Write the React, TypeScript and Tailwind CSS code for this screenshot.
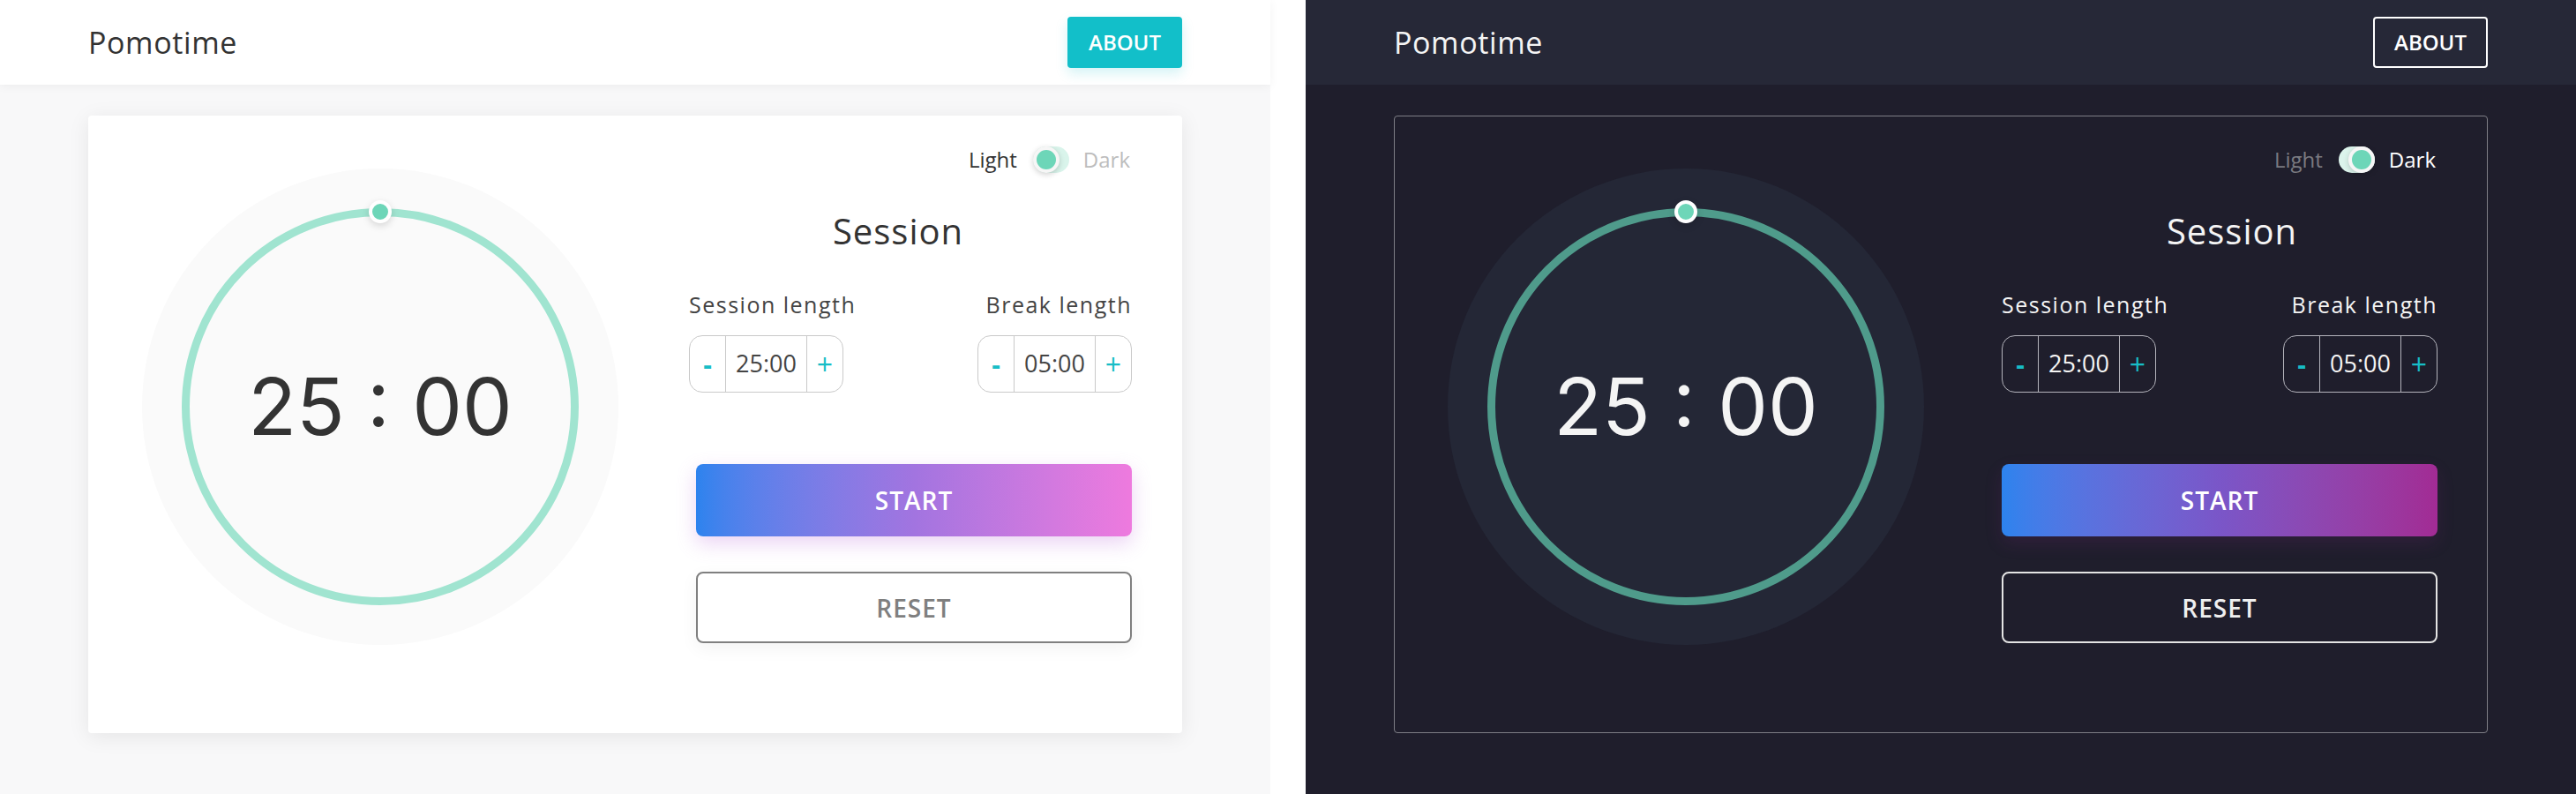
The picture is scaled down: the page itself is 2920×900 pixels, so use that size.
import React from "react";

const ui = "font-['Open_Sans',sans-serif]";

function Stepper({ value, dark }: { value: string; dark: boolean }) {
  const line = dark ? "border-[#b4b4bc]" : "border-[#c9c9c9]";
  return (
    <div className={`flex h-[65px] w-[175px] rounded-[15px] border ${line}`}>
      <div className={`flex w-[41px] items-center justify-center border-r ${line} text-[30px] font-bold text-[#17bdc6]`}>
        -
      </div>
      <div
        className={`flex w-[92px] items-center justify-center border-r ${line} text-[27px] ${
          dark ? "text-[#f4f4f4]" : "text-[#444]"
        }`}
      >
        {value}
      </div>
      <div className="flex flex-1 items-center justify-center text-[32px] text-[#17bdc6]">+</div>
    </div>
  );
}

function Toggle({ dark }: { dark: boolean }) {
  return (
    <div className={`flex h-[30px] w-[41px] rounded-full ${dark ? "justify-end bg-[#dcf4ec]" : "bg-[#d9f4eb]"}`}>
      <div className="h-[30px] w-[30px] rounded-full border-4 border-[#f6f6f6] bg-[#6dd6b8] shadow-[0_2px_6px_rgba(0,0,0,0.18)]" />
    </div>
  );
}

function Panel({ dark }: { dark: boolean }) {
  const text = dark ? "text-[#f4f4f4]" : "text-[#333]";
  const label = dark ? "text-[#f4f4f4]" : "text-[#444]";
  return (
    <div className={`flex h-[900px] w-[1440px] shrink-0 flex-col ${ui} ${dark ? "bg-[#1f1e2c]" : "bg-[#f8f8f9]"}`}>
      {/* Header */}
      <header
        className={`flex h-[96px] shrink-0 items-center justify-between px-[100px] ${
          dark ? "bg-[#262837]" : "bg-white shadow-[0_2px_10px_rgba(0,0,0,0.05)]"
        }`}
      >
        <span className={`text-[34px] tracking-[0.6px] ${text}`}>Pomotime</span>
        <button
          className={`h-[58px] w-[130px] rounded-[4px] text-[24px] font-semibold text-white ${
            dark ? "border-2 border-white" : "bg-[#12bfc9] shadow-[0_6px_14px_rgba(18,191,201,0.18)]"
          }`}
        >
          ABOUT
        </button>
      </header>

      {/* Body */}
      <main className="px-[100px] pt-[35px]">
        <div
          className={`flex h-[700px] rounded-[4px] border pl-[60px] pr-[56px] ${
            dark ? "border-[#7e7e86]" : "border-transparent bg-white shadow-[0_4px_24px_rgba(0,0,0,0.08)]"
          }`}
        >
          {/* Timer */}
          <div
            className={`relative mt-[59px] flex h-[540px] w-[540px] shrink-0 items-center justify-center rounded-full ${
              dark ? "bg-[#242736]" : "bg-[#fafafa]"
            }`}
          >
            <svg className="absolute inset-0" width="540" height="540" viewBox="0 0 540 540">
              <circle
                cx="270"
                cy="270"
                r="220.5"
                fill="none"
                stroke={dark ? "#4f9b8b" : "#a0e4d0"}
                strokeWidth="9"
              />
            </svg>
            <div className="absolute left-[257px] top-[36px] h-[26px] w-[26px] rounded-full border-4 border-white bg-[#6dd6b8] shadow-[0_3px_8px_rgba(0,0,0,0.15)]" />
            <span className={`relative font-['Inter',sans-serif] text-[90px] leading-none ${text}`}>25 : 00</span>
          </div>

          {/* Controls */}
          <div className="ml-[80px] flex flex-1 flex-col pt-[34px]">
            <div className="flex h-[30px] items-center justify-end pr-[2px] text-[24px] font-medium">
              <span className={dark ? "text-[#7a7a80]" : "text-[#333]"}>Light</span>
              <div className="ml-[18px] mr-[16px]">
                <Toggle dark={dark} />
              </div>
              <span className={dark ? "text-white" : "text-[#bdbdbd]"}>Dark</span>
            </div>

            <h2
              className={`mt-[42px] text-center text-[40px] font-medium leading-[48px] tracking-[1px] ${text} ${
                dark ? "pl-[36px]" : "pr-[28px]"
              }`}
            >
              Session
            </h2>

            <div className={`mt-[44px] flex justify-between ${dark ? "pl-[8px]" : ""}`}>
              <div className="flex flex-col">
                <span className={`text-[25px] font-medium leading-[30px] tracking-[1.5px] ${label}`}>Session length</span>
                <div className="mt-[20px]">
                  <Stepper value="25:00" dark={dark} />
                </div>
              </div>
              <div className="flex flex-col items-end">
                <span className={`text-[25px] font-medium leading-[30px] tracking-[1.5px] ${label}`}>Break length</span>
                <div className="mt-[20px]">
                  <Stepper value="05:00" dark={dark} />
                </div>
              </div>
            </div>

            <button
              className={`ml-[8px] mt-[81px] h-[82px] rounded-[8px] text-[28px] font-semibold tracking-[1px] text-white ${
                dark
                  ? "bg-linear-to-r from-[#2c83ee] via-[#7a56c8] to-[#a22b94] shadow-[0_8px_20px_rgba(150,40,150,0.15)]"
                  : "bg-linear-to-r from-[#2c83ee] via-[#a274e0] to-[#ee7ade] shadow-[0_8px_22px_rgba(190,110,220,0.3)]"
              }`}
            >
              START
            </button>
            <button
              className={`ml-[8px] mt-[40px] h-[81px] rounded-[8px] border-2 text-[28px] font-semibold tracking-[1px] ${
                dark
                  ? "border-[#e4e4e4] text-[#efefef]"
                  : "border-[#808080] bg-white text-[#7f7f7f] shadow-[0_6px_20px_rgba(0,0,0,0.05)]"
              }`}
            >
              RESET
            </button>
          </div>
        </div>
      </main>
    </div>
  );
}

export default function App() {
  return (
    <div className="flex h-[900px] w-[2920px] gap-[40px] bg-white">
      <Panel dark={false} />
      <Panel dark />
    </div>
  );
}
